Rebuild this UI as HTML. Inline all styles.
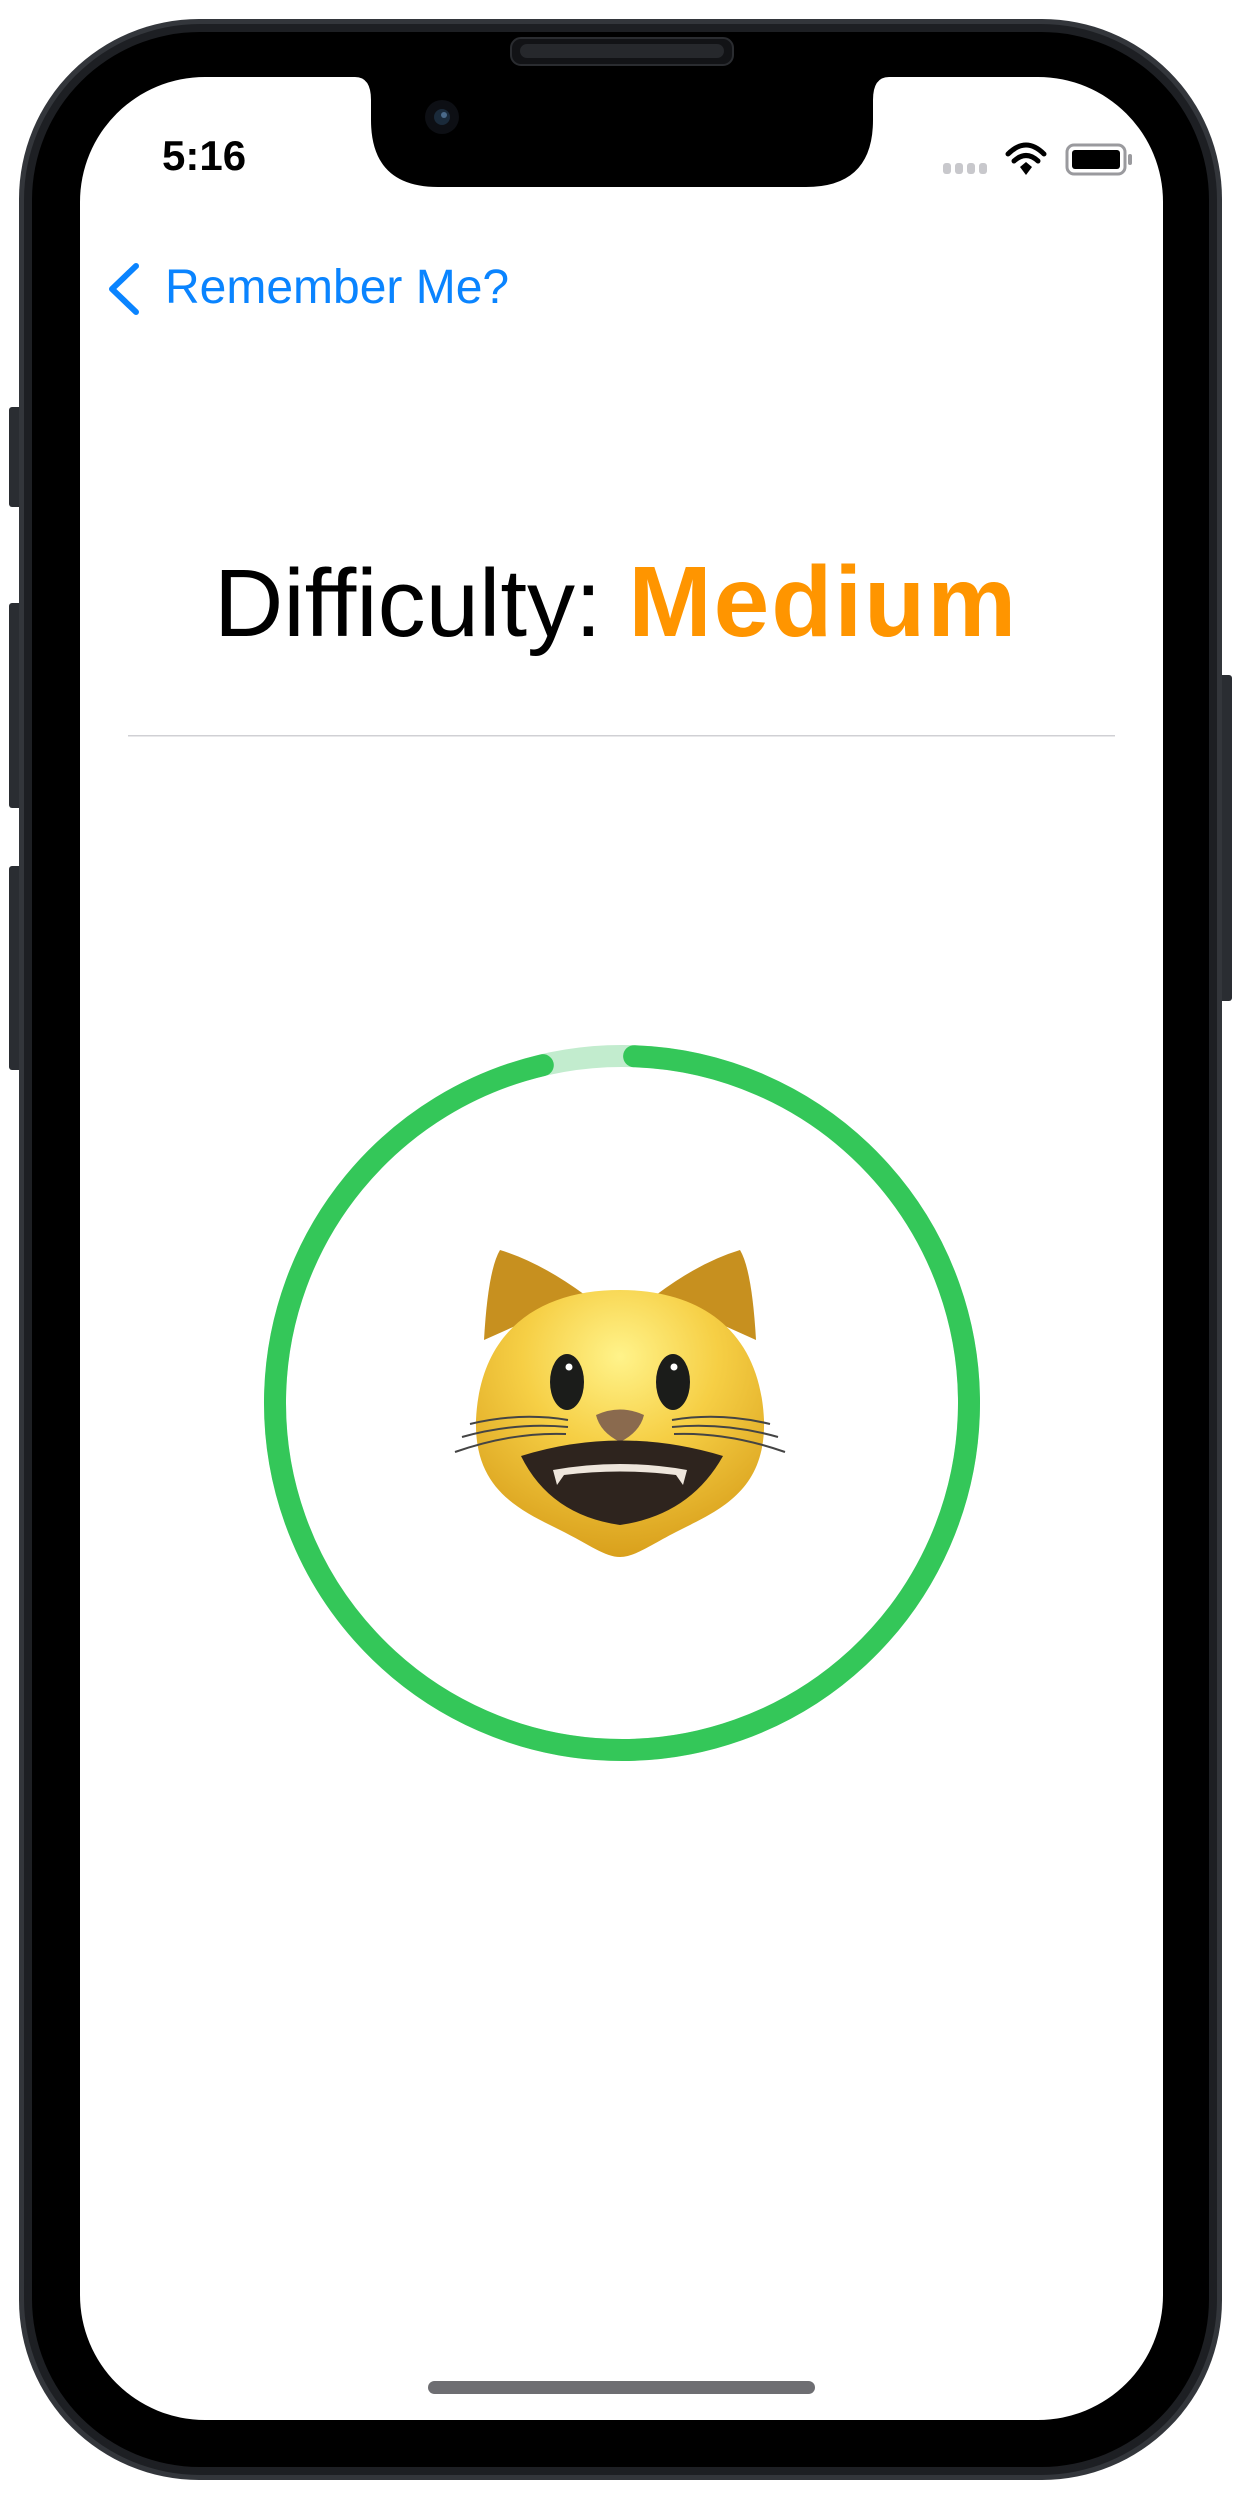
<!DOCTYPE html>
<html><head><meta charset="utf-8"><style>
html,body{margin:0;padding:0;background:#fff;}
body{width:1240px;height:2500px;position:relative;overflow:hidden;font-family:"Liberation Sans",sans-serif;}
svg{position:absolute;left:0;top:0;}
.t{position:absolute;white-space:nowrap;}
</style></head><body>
<svg width="1240" height="2500" viewBox="0 0 1240 2500">
  <defs>
    <radialGradient id="hg" cx="0.5" cy="0.25" r="0.75">
      <stop offset="0" stop-color="#fff38a"/>
      <stop offset="0.45" stop-color="#f6cf45"/>
      <stop offset="1" stop-color="#d9a01c"/>
    </radialGradient>
  </defs>
  <rect x="9" y="407" width="14" height="100" rx="3" fill="#2a2d32"/>
  <rect x="9" y="603" width="14" height="205" rx="3" fill="#2a2d32"/>
  <rect x="9" y="866" width="14" height="204" rx="3" fill="#2a2d32"/>
  <rect x="1218" y="675" width="14" height="326" rx="3" fill="#2a2d32"/>
  <rect x="19" y="19" width="1203" height="2461" rx="180" fill="#33363b"/>
  <rect x="24" y="24" width="1193" height="2451" rx="176" fill="#1d1f23"/>
  <rect x="32" y="32" width="1177" height="2435" rx="168" fill="#000"/>
  <rect x="80" y="77" width="1083" height="2343" rx="125" fill="#fff"/>
  <path d="M355 77 H889 Q873 77 873 100 V120 Q873 187 806 187 H438 Q371 187 371 120 V100 Q371 77 355 77 Z" fill="#000"/>
  <rect x="511" y="38" width="222" height="27" rx="10" fill="#121316" stroke="#2a2c30" stroke-width="2"/>
  <rect x="520" y="44" width="204" height="14" rx="7" fill="#26282c"/>
  <circle cx="442" cy="117" r="17" fill="#0d0f14"/>
  <circle cx="442" cy="117" r="8" fill="#1a2a3a"/>
  <circle cx="444" cy="115" r="3" fill="#4a6a8a"/>
  <g fill="#c8c8cc">
    <rect x="943" y="163" width="8" height="11" rx="3"/>
    <rect x="955" y="163" width="8" height="11" rx="3"/>
    <rect x="967" y="163" width="8" height="11" rx="3"/>
    <rect x="979" y="163" width="8" height="11" rx="3"/>
  </g>
  <g fill="none" stroke="#000" stroke-width="5" stroke-linecap="round">
    <path d="M1008 154 Q1026 136 1044 154"/>
    <path d="M1014 161 Q1026 150 1038 161"/>
  </g>
  <path d="M1020 167 L1026 162 L1032 167 L1026 175 Z" fill="#000"/>
  <rect x="1067" y="145" width="58" height="29" rx="7" fill="none" stroke="#9a9a9e" stroke-width="3"/>
  <rect x="1072" y="150" width="48" height="19" rx="3" fill="#000"/>
  <rect x="1128" y="154" width="4" height="11" rx="2" fill="#9a9a9e"/>
  <path d="M136 266 L112 289 L136 312" fill="none" stroke="#0a84ff" stroke-width="6" stroke-linecap="round" stroke-linejoin="round"/>
  <rect x="128" y="735" width="987" height="1.5" fill="#d0d0d4"/>
  <circle cx="622" cy="1403" r="347" fill="none" stroke="#c2ecce" stroke-width="22"/>
  <circle cx="622" cy="1403" r="347" fill="none" stroke="#34c759" stroke-width="22" stroke-linecap="round" stroke-dasharray="2088 3000" transform="rotate(-88 622 1403)"/>
  <path d="M484 1340 Q488 1270 500 1250 Q540 1262 585 1295 Z" fill="#c7901f"/>
  <path d="M756 1340 Q752 1270 740 1250 Q700 1262 656 1295 Z" fill="#c7901f"/>
  <path d="M620 1290 C700 1290 760 1330 764 1420 C766 1490 720 1510 680 1530 C650 1545 635 1557 620 1557 C605 1557 590 1545 560 1530 C520 1510 474 1490 476 1420 C480 1330 540 1290 620 1290 Z" fill="url(#hg)"/>
  <ellipse cx="567" cy="1382" rx="17" ry="28" fill="#1b1c1a"/>
  <ellipse cx="673" cy="1382" rx="17" ry="28" fill="#1b1c1a"/>
  <circle cx="569" cy="1367" r="3.5" fill="#fff"/>
  <circle cx="674" cy="1367" r="3.5" fill="#fff"/>
  <path d="M596 1415 Q620 1404 644 1415 Q640 1432 620 1442 Q600 1432 596 1415 Z" fill="#8a6a4e"/>
  <path d="M521 1456 Q620 1425 723 1456 Q690 1515 620 1525 Q550 1515 521 1456 Z" fill="#2e241e"/>
  <path d="M553 1470 Q620 1458 687 1470 L683 1485 L676 1475 Q620 1468 564 1475 L557 1485 Z" fill="#eee6dc"/>
  <g fill="none" stroke="#444" stroke-width="2">
    <path d="M568 1420 Q520 1412 470 1424"/><path d="M568 1427 Q515 1422 462 1437"/><path d="M566 1434 Q512 1432 455 1452"/>
    <path d="M672 1420 Q720 1412 770 1424"/><path d="M672 1427 Q725 1422 778 1437"/><path d="M674 1434 Q728 1432 785 1452"/>
  </g>
  <rect x="428" y="2381" width="387" height="13" rx="6.5" fill="#6e6e72"/>
</svg>
<div class="t" style="left:162px;top:132px;font-size:42px;font-weight:bold;color:#000;">5:16</div>
<div class="t" style="left:165px;top:260px;font-size:48px;color:#0a84ff;">Remember Me?</div>
<div class="t" style="left:214px;top:545px;font-size:96px;color:#000;">Difficulty: <span style="color:#ff9500;font-weight:bold;font-size:100px;letter-spacing:2px;">Medium</span></div>
</body></html>
